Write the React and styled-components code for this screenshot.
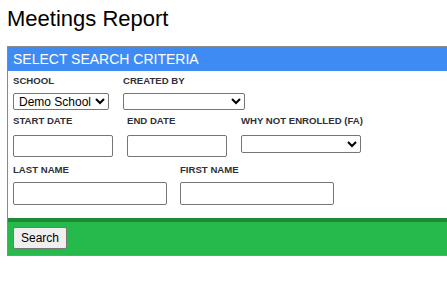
import React from "react";
import styled, { createGlobalStyle } from "styled-components";

const GlobalStyle = createGlobalStyle`
  body {
    margin: 0;
    background: #fff;
    font-family: "Liberation Sans", Arial, sans-serif;
    overflow: hidden;
  }
`;

const Page = styled.div`
  padding: 6px 0 0 7px;
`;

const Title = styled.h1`
  margin: 0 0 15px;
  font-size: 22px;
  font-weight: normal;
  line-height: 25px;
  color: #000;
`;

// panel is wider than the window in the original, right edge is cut off
const Panel = styled.div`
  width: 470px;
  border: 1px solid #8a8a8a;
`;

const PanelHeader = styled.div`
  height: 24px;
  line-height: 24px;
  padding-left: 5px;
  background: #3f8bf4;
  color: #fff;
  font-size: 14px;
`;

const Criteria = styled.div`
  padding: 4px 5px 13px;
  background: #fff;
`;

const Row = styled.div`
  display: flex;
  gap: ${(p) => p.$gap || 14}px;
  margin-top: ${(p) => p.$top || 0}px;
`;

const Field = styled.div`
  display: flex;
  flex-direction: column;
  align-items: flex-start;
`;

const Label = styled.label`
  font-size: 9.6px;
  font-weight: bold;
  line-height: 11px;
  color: #2f3038;
  white-space: nowrap;
  margin-bottom: ${(p) => p.$space || 7}px;
`;

const Select = styled.select`
  width: ${(p) => p.$w}px;
  height: ${(p) => p.$h || 17}px;
  font-family: "Liberation Sans", Arial, sans-serif;
  font-size: 12px;
  color: #000;
  background: #fff;
  border: 1px solid #767676;
  border-radius: 2px;
  padding: 0 0 0 1px;
  margin: 0;
`;

const TextInput = styled.input`
  box-sizing: border-box;
  width: ${(p) => p.$w}px;
  height: ${(p) => p.$h || 22}px;
  border: 1px solid #767676;
  border-radius: 2px;
  padding: 1px 2px;
  margin: 0;
  font-family: "Liberation Sans", Arial, sans-serif;
  font-size: 12px;
`;

const Footer = styled.div`
  background: #26b94b;
  border-top: 4px solid #1c8a35;
  padding: 5px 5px 6px;
`;

const Button = styled.button`
  height: 22px;
  padding: 0 7px;
  font-family: "Liberation Sans", Arial, sans-serif;
  font-size: 12px;
  color: #000;
  background: #efefef;
  border: 1px solid #767676;
  border-radius: 2px;
`;

export default function App() {
  return (
    <>
      <GlobalStyle />
      <Page>
        <Title>Meetings Report</Title>
        <Panel>
          <PanelHeader>SELECT SEARCH CRITERIA</PanelHeader>
          <Criteria>
            <Row>
              <Field>
                <Label>SCHOOL</Label>
                <Select $w={96} defaultValue="demo">
                  <option value="demo">Demo School</option>
                </Select>
              </Field>
              <Field>
                <Label>CREATED BY</Label>
                <Select $w={122} defaultValue="">
                  <option value=""></option>
                </Select>
              </Field>
            </Row>
            <Row $top={5}>
              <Field>
                <Label $space={9}>START DATE</Label>
                <TextInput $w={100} />
              </Field>
              <Field>
                <Label $space={9}>END DATE</Label>
                <TextInput $w={100} />
              </Field>
              <Field>
                <Label $space={9}>WHY NOT ENROLLED (FA)</Label>
                <Select $w={120} $h={18} defaultValue="">
                  <option value=""></option>
                </Select>
              </Field>
            </Row>
            <Row $top={7} $gap={13}>
              <Field>
                <Label>LAST NAME</Label>
                <TextInput $w={154} $h={23} />
              </Field>
              <Field>
                <Label>FIRST NAME</Label>
                <TextInput $w={154} $h={23} />
              </Field>
            </Row>
          </Criteria>
          <Footer>
            <Button>Search</Button>
          </Footer>
        </Panel>
      </Page>
    </>
  );
}
